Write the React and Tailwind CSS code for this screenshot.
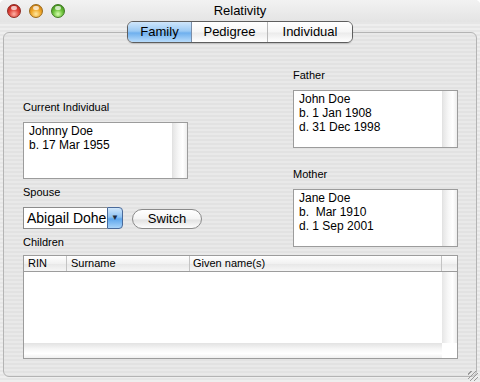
import React from 'react'

const stripes =
  'bg-[repeating-linear-gradient(to_bottom,#eeeeee_0px,#eeeeee_2px,#e6e6e6_2px,#e6e6e6_4px)]'

function Label({ children, className = '' }) {
  return <div className={`h-[13px] text-[11px] leading-[13px] text-black ${className}`}>{children}</div>
}

function InfoBox({ lines, height }) {
  return (
    <div className={`flex border border-[#9c9c9c] bg-white ${height}`}>
      <div className="flex-1 pl-[5px] pt-[1px] text-[12px] leading-[14px] text-black">
        {lines.map((l) => (
          <div key={l} className="whitespace-pre">{l}</div>
        ))}
      </div>
      <div className="w-[15px] border-l border-[#e2e2e2] bg-[linear-gradient(to_right,#e6e6e6,#f7f7f7_40%,#ffffff_70%,#ededed)]" />
    </div>
  )
}

function Light({ color }) {
  const styles = {
    red: 'bg-[radial-gradient(circle_at_50%_75%,#ffb3a6_0%,#e0443a_45%,#a81a14_100%)] border-[#8e2a22]',
    yellow: 'bg-[radial-gradient(circle_at_50%_75%,#ffe9a0_0%,#f0a82a_45%,#b86a08_100%)] border-[#9a6a1a]',
    green: 'bg-[radial-gradient(circle_at_50%_75%,#d8ffb0_0%,#6cc23a_45%,#2f7a10_100%)] border-[#3f7a22]',
  }
  return (
    <div className={`relative w-[14px] h-[14px] rounded-full border ${styles[color]}`}>
      <div className="absolute left-[3px] top-[1px] w-[6px] h-[4px] rounded-full bg-white/70" />
    </div>
  )
}

export default function App() {
  return (
    <div
      className={`w-[480px] h-[382px] flex flex-col overflow-hidden rounded-t-[5px] ${stripes}`}
      style={{ fontFamily: '"Liberation Sans", Arial, sans-serif' }}
    >
      {/* Title bar */}
      <div className="h-[22px] grid grid-cols-[1fr_auto_1fr] items-center bg-[linear-gradient(to_bottom,#f2f2f2,#e4e4e4)]">
        <div className="flex items-center gap-[8px] pl-[7px]">
          <Light color="red" />
          <Light color="yellow" />
          <Light color="green" />
        </div>
        <div className="text-[13px] text-black">Relativity</div>
        <div />
      </div>

      {/* Content */}
      <div className="relative flex-1 px-[3px] pt-[10px] pb-[5px] flex flex-col">
        {/* Segmented tabs */}
        <div className="absolute top-[-1px] left-1/2 -translate-x-1/2 z-10 flex h-[22px] w-[226px] rounded-[6px] border border-[#5e5e5e] overflow-hidden text-[13px] text-black shadow-[0_1px_1px_rgba(0,0,0,0.15)]">
          <div className="w-[64px] flex items-center justify-center border-r border-[#7a8ea8] bg-[linear-gradient(to_bottom,#cfe6fb_0%,#9ccaf4_45%,#6fb0ee_55%,#b9dcfb_100%)]">
            Family
          </div>
          <div className="w-[76px] flex items-center justify-center border-r border-[#b8b8b8] bg-[linear-gradient(to_bottom,#ffffff_0%,#f6f6f6_50%,#ebebeb_55%,#ffffff_100%)]">
            Pedigree
          </div>
          <div className="flex-1 flex items-center justify-center bg-[linear-gradient(to_bottom,#ffffff_0%,#f6f6f6_50%,#ebebeb_55%,#ffffff_100%)]">
            Individual
          </div>
        </div>

        {/* Tab box */}
        <div className="flex-1 rounded-[6px] border border-[#b4b4b4] bg-[repeating-linear-gradient(to_bottom,#e9e9e9_0px,#e9e9e9_2px,#e2e2e2_2px,#e2e2e2_4px)] pl-[19px] pr-[18px] pt-[36px] flex flex-col">
          <div className="flex justify-between">
            {/* Left column */}
            <div className="w-[165px] pt-[32px] flex flex-col">
              <Label>Current Individual</Label>
              <div className="mt-[8px]">
                <InfoBox height="h-[57px]" lines={['Johnny Doe', 'b. 17 Mar 1955']} />
              </div>
              <Label className="mt-[7px]">Spouse</Label>
              <div className="mt-[8px] flex items-start">
                <div className="flex shrink-0 h-[22px] w-[100px]">
                  <div className="flex-1 overflow-hidden whitespace-nowrap border border-r-0 border-[#8c8c8c] bg-white pl-[3px] text-[14px] leading-[20px] text-black">
                    Abigail Doherty
                  </div>
                  <div className="w-[16px] shrink-0 flex items-center justify-center rounded-r-[4px] border border-[#4a6a9a] bg-[linear-gradient(to_bottom,#cfe6fb_0%,#8fc2f2_45%,#5ea6ec_55%,#a9d4fa_100%)] text-[8px] text-[#1a2a40]">
                    ▼
                  </div>
                </div>
                <div className="ml-[9px] mt-[2px] shrink-0 h-[20px] w-[70px] flex items-center justify-center rounded-full border border-[#8a8a8a] bg-[linear-gradient(to_bottom,#ffffff_0%,#f4f4f4_50%,#e2e2e2_55%,#fdfdfd_100%)] text-[13px] text-black">
                  Switch
                </div>
              </div>
              <Label className="mt-[7px]">Children</Label>
            </div>

            {/* Right column */}
            <div className="w-[165px] flex flex-col">
              <Label>Father</Label>
              <div className="mt-[8px]">
                <InfoBox height="h-[58px]" lines={['John Doe', 'b. 1 Jan 1908', 'd. 31 Dec 1998']} />
              </div>
              <Label className="mt-[20px]">Mother</Label>
              <div className="mt-[8px]">
                <InfoBox height="h-[58px]" lines={['Jane Doe', 'b.  Mar 1910', 'd. 1 Sep 2001']} />
              </div>
            </div>
          </div>

          {/* Children table */}
          <div className="mt-[6px] h-[104px] border border-[#9c9c9c] bg-white flex flex-col">
            <div className="h-[16px] flex border-b border-[#9c9c9c] bg-[linear-gradient(to_bottom,#ffffff,#f1f1f1_50%,#e8e8e8_55%,#f6f6f6)] text-[11px] leading-[15px] text-black">
              <div className="w-[43px] pl-[4px] border-r border-[#c4c4c4]">RIN</div>
              <div className="w-[123px] pl-[4px] border-r border-[#c4c4c4]">Surname</div>
              <div className="flex-1 pl-[3px] border-r border-[#c4c4c4]">Given name(s)</div>
              <div className="w-[15px]" />
            </div>
            <div className="flex-1 flex">
              <div className="flex-1 bg-white" />
              <div className="w-[15px] bg-[linear-gradient(to_right,#e6e6e6,#f7f7f7_40%,#ffffff_70%,#ededed)]" />
            </div>
            <div className="h-[15px] flex">
              <div className="flex-1 bg-[linear-gradient(to_bottom,#e2e2e2,#f6f6f6_40%,#ffffff_70%,#efefef)]" />
              <div className="w-[15px] bg-white" />
            </div>
          </div>
        </div>

        {/* Resize grip */}
        <div className="absolute right-[2px] bottom-[1px] w-[10px] h-[10px] bg-[repeating-linear-gradient(135deg,transparent_0px,transparent_2px,#9a9a9a_2px,#9a9a9a_3px)]" />
      </div>
    </div>
  )
}
